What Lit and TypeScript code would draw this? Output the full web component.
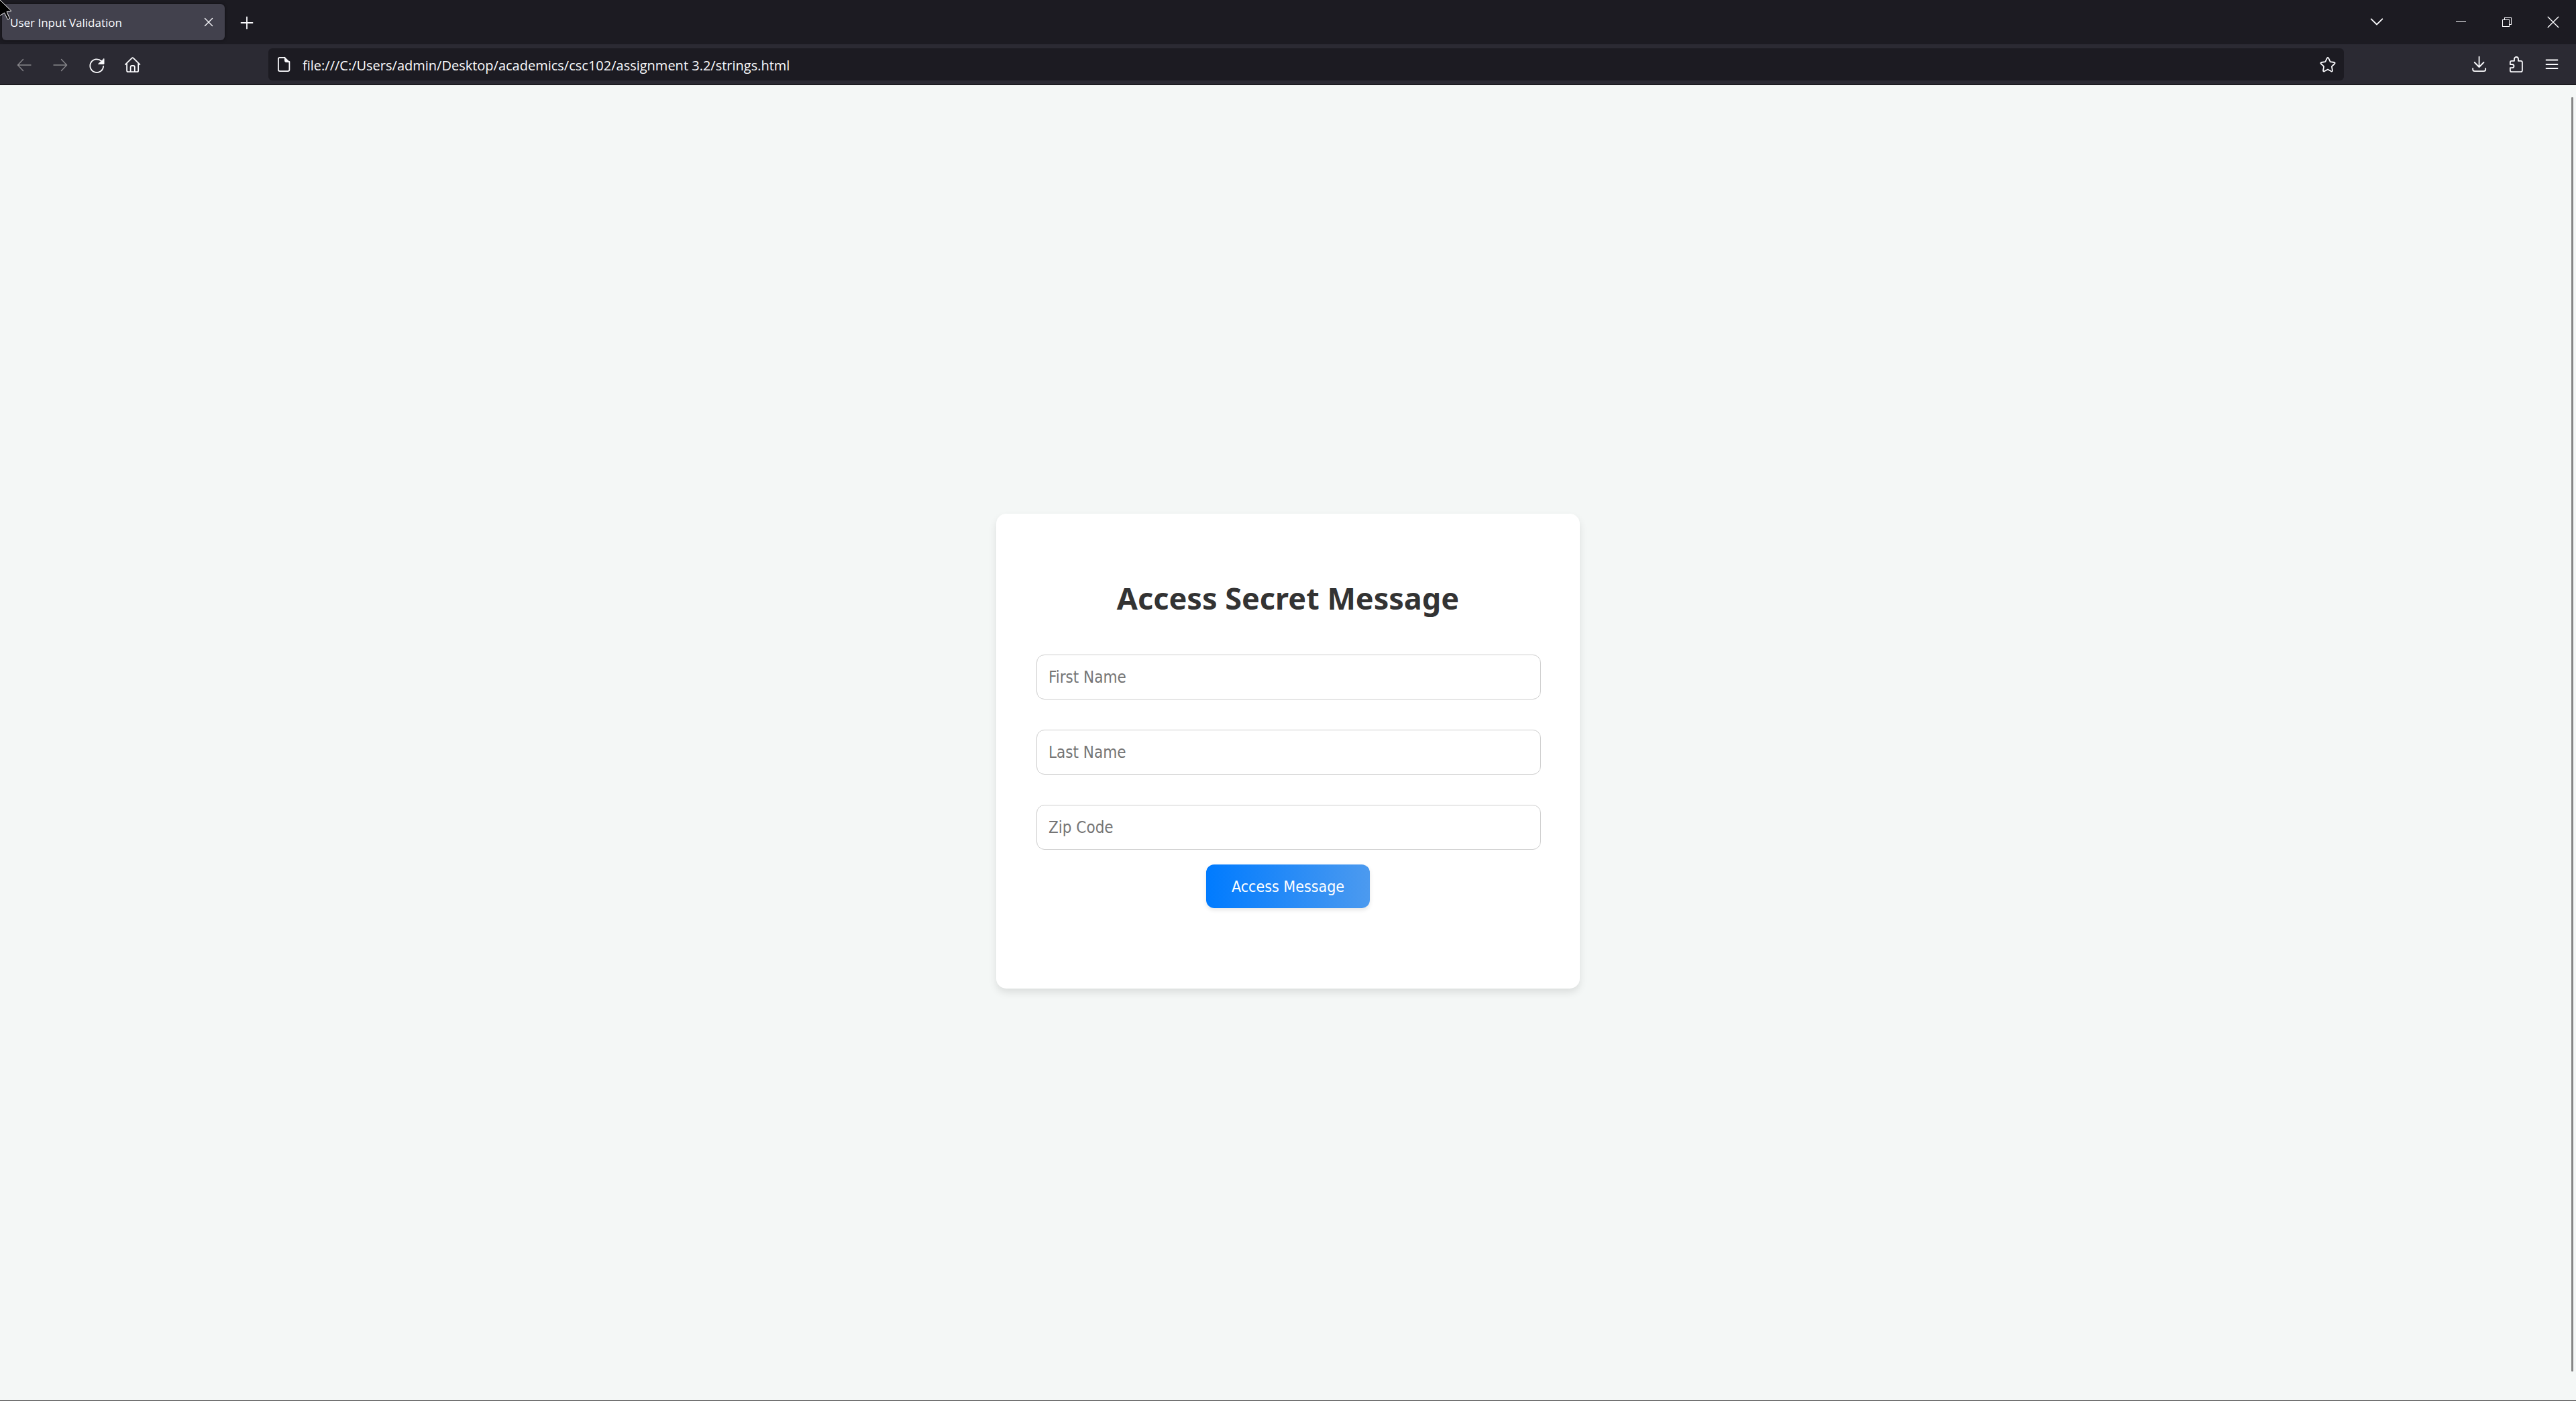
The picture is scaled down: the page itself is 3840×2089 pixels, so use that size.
import { LitElement, html, css, svg, type TemplateResult, type SVGTemplateResult } from "lit";
import { customElement, property, state } from "lit/decorators.js";

const GLYPHS: Record<string, SVGTemplateResult> = {
  close: svg`<path d="M6.5 6.5 17.5 17.5M17.5 6.5 6.5 17.5" />`,
  plus: svg`<path d="M12 4.5v17M3.5 13h17" />`,
  chevron: svg`<path d="M3.7 7.3 12 15.5 20.3 7.3" />`,
  minimize: svg`<path class="crisp" d="M6 11.5h15" />`,
  restore: svg`<path class="crisp" d="M6.5 8.5h10v10h-10zM9.5 8.5v-3h10v10h-3" />`,
  exit: svg`<path d="M5.2 4.2 20.8 19.8M20.8 4.2 5.2 19.8" />`,
  back: svg`<path d="M22 13H2.6M10.5 4.6 2.4 13l8.1 8.4" />`,
  forward: svg`<path d="M2 13h19.4M13.5 4.6 21.6 13l-8.1 8.4" />`,
  reload: svg`<path d="M22.1 14.6A9.9 9.9 0 1 1 19 7" /><path class="solid" d="M23 3.8v7.6h-8.2z" />`,
  home: svg`<path d="M.9 12.2 10.6 2.7q1.1-1 2.2 0l9.6 9.5M3.1 10.6v10.6q0 2 2 2h13.1q2 0 2-2V10.6M8.6 23v-7q0-2 2-2h2.2q2 0 2 2v7" />`,
  file: svg`<path d="M13.5 1.9H6.2q-2.3 0-2.3 2.3v15.6q0 2.3 2.3 2.3h11.9q2.3 0 2.3-2.3V8" /><path class="solid" d="M13.5 1.4 20.9 8.6h-5.4q-2 0-2-2z" />`,
  star: svg`<path d="M10.9 2.7q1.1-1.8 2.2 0l2.6 5.5 5.8.8q2 .5.7 2l-4.3 4.2 1 5.8q.1 2.1-1.8 1.3L12 19.5l-5.1 2.8q-1.9.8-1.8-1.3l1-5.8-4.3-4.2q-1.3-1.5.7-2l5.8-.8z" />`,
  download: svg`<path d="M11.6.6v15.2M4.7 9l6.9 7 6.9-7M2.2 18v1.5q0 2.7 2.7 2.7h13.6q2.7 0 2.7-2.7V18" />`,
  extension: svg`<path d="M3.9 12V9q0-2.2 2.2-2.2H10V4a3 3 0 0 1 6 0v2.8h3.7q2.2 0 2.2 2.2v12q0 2.2-2.2 2.2H6.1q-2.2 0-2.2-2.2v-3.8h3a2.6 2.6 0 0 0 0-5.2z" />`,
  menu: svg`<path d="M3.5 5.5h17M3.5 12h17M3.5 18h17" />`,
};

@customElement("chrome-icon")
export class ChromeIcon extends LitElement {
  @property() name = "";
  @property({ type: Number }) span = 24;

  static styles = css`
    :host {
      display: block;
      flex: none;
    }
    .glyph {
      display: block;
      overflow: visible;
      fill: none;
      stroke: currentColor;
      stroke-width: 1.8;
      stroke-linecap: round;
      stroke-linejoin: round;
    }
    .thin {
      stroke-width: 1.4;
    }
    .solid {
      fill: currentColor;
      stroke-width: 1;
    }
    .crisp {
      stroke-width: 1;
      stroke-linecap: butt;
      stroke-linejoin: miter;
      shape-rendering: crispEdges;
    }
  `;

  render() {
    const thin = ["exit", "back", "forward", "close"].includes(this.name);
    return html`<svg
      class="glyph ${thin ? "thin" : ""}"
      width=${this.span}
      height="24"
      viewBox="0 0 ${this.span} 24"
      aria-hidden="true"
    >${GLYPHS[this.name]}</svg>`;
  }
}

@customElement("browser-chrome")
export class BrowserChrome extends LitElement {
  static styles = css`
    :host {
      display: block;
      color: #fbfbfe;
      font-family: "Open Sans", "Noto Sans", sans-serif;
      border-bottom: 1px solid #0c0c0d;
    }
    button {
      display: flex;
      align-items: center;
      justify-content: center;
      flex: none;
      width: 48px;
      height: 48px;
      padding: 0;
      border: 0;
      border-radius: 6px;
      background: none;
      color: inherit;
    }
    button:disabled {
      color: #87868b;
    }
    .tabs {
      display: flex;
      align-items: center;
      height: 66px;
      background: #1c1b22;
    }
    .tab {
      display: flex;
      align-items: center;
      width: 332px;
      height: 54px;
      margin: 0 9px 0 3px;
      padding-left: 12px;
      box-sizing: border-box;
      border-radius: 6px;
      background: #42414d;
      box-shadow: 0 0 4px rgba(0, 0, 0, 0.5);
      font-size: 17px;
    }
    .title {
      flex: 1;
      white-space: nowrap;
    }
    .list {
      margin-left: auto;
      margin-right: 66px;
    }
    .window {
      width: 69px;
      height: 66px;
      border-radius: 0;
    }
    .toolbar {
      display: flex;
      align-items: center;
      gap: 6px;
      height: 60px;
      padding: 0 12px;
      background: #2b2a33;
    }
    .address {
      display: flex;
      align-items: center;
      gap: 16px;
      flex: 1;
      height: 48px;
      margin: 0 172px;
      padding-left: 11px;
      border-radius: 6px;
      background: #1c1b22;
    }
    .url {
      flex: 1;
      min-width: 0;
      padding: 2px 0 0;
      border: 0;
      outline: 0;
      background: none;
      color: inherit;
      font: inherit;
      font-size: 20px;
    }
  `;

  private button(label: string, icon: string, disabled = false): TemplateResult {
    return html`<button type="button" aria-label=${label} ?disabled=${disabled}>
      <chrome-icon name=${icon}></chrome-icon>
    </button>`;
  }

  render() {
    return html`
      <div class="tabs">
        <div class="tab">
          <span class="title">User Input Validation</span>
          ${this.button("Close tab", "close")}
        </div>
        ${this.button("New tab", "plus")}
        <button class="list" type="button" aria-label="List all tabs">
          <chrome-icon name="chevron"></chrome-icon>
        </button>
        ${[
          ["Minimize", "minimize"],
          ["Restore", "restore"],
          ["Close", "exit"],
        ].map(
          ([label, icon]) => html`<button class="window" type="button" aria-label=${label}>
            <chrome-icon name=${icon} span="25"></chrome-icon>
          </button>`
        )}
      </div>
      <nav class="toolbar">
        ${this.button("Back", "back", true)} ${this.button("Forward", "forward", true)}
        ${this.button("Reload", "reload")} ${this.button("Home", "home")}
        <div class="address">
          <chrome-icon name="file"></chrome-icon>
          <input
            class="url"
            type="text"
            aria-label="Address"
            spellcheck="false"
            value="file:///C:/Users/admin/Desktop/academics/csc102/assignment 3.2/strings.html"
          />
          ${this.button("Bookmark this page", "star")}
        </div>
        ${this.button("Downloads", "download")} ${this.button("Extensions", "extension")}
        ${this.button("Menu", "menu")}
      </nav>
    `;
  }
}

@customElement("secret-form")
export class SecretForm extends LitElement {
  @state() private values: Record<string, string> = {};

  private fields = [
    { id: "first-name", label: "First Name" },
    { id: "last-name", label: "Last Name" },
    { id: "zip-code", label: "Zip Code" },
  ];

  static styles = css`
    :host {
      display: block;
      width: 870px;
      max-width: 100%;
      box-sizing: border-box;
      padding: 60px;
      border-radius: 15px;
      background: #fff;
      box-shadow: 0 6px 12px rgba(0, 0, 0, 0.1);
    }
    .heading {
      margin: 34px 0 52px;
      color: #333;
      font: 700 45px/64px "Noto Sans", "Open Sans", sans-serif;
      text-align: center;
    }
    .form {
      display: flex;
      flex-direction: column;
      align-items: center;
      gap: 22px;
      margin-bottom: 60px;
      font-family: "DejaVu Sans Condensed", "DejaVu Sans", sans-serif;
      font-stretch: condensed;
    }
    .fields {
      display: grid;
      gap: 45px;
      align-self: stretch;
      margin-right: -2px;
    }
    .field {
      width: 100%;
      height: 67px;
      box-sizing: border-box;
      padding: 2px 17px 0;
      border: 1px solid #ccc;
      border-radius: 12px;
      background: #fff;
      color: #333;
      font-family: inherit;
      font-size: 24px;
    }
    .field::placeholder {
      color: #757575;
      opacity: 1;
    }
    .submit {
      height: 65px;
      padding: 2px 38px 0;
      border: 0;
      border-radius: 12px;
      background: linear-gradient(to right, #007bff, #4c9aef);
      box-shadow: 0 3px 6px rgba(0, 0, 0, 0.1);
      color: #fff;
      font-family: inherit;
      font-size: 23px;
    }
  `;

  private setValue(id: string, e: Event) {
    this.values = { ...this.values, [id]: (e.target as HTMLInputElement).value };
  }

  render() {
    return html`
      <h1 class="heading">Access Secret Message</h1>
      <form class="form" @submit=${(e: Event) => e.preventDefault()}>
        <div class="fields">
          ${this.fields.map(
            (f) => html`<input
              class="field"
              type="text"
              id=${f.id}
              aria-label=${f.label}
              placeholder=${f.label}
              .value=${this.values[f.id] ?? ""}
              @input=${(e: Event) => this.setValue(f.id, e)}
            />`
          )}
        </div>
        <button class="submit" type="submit">Access Message</button>
      </form>
    `;
  }
}

@customElement("app-root")
export class AppRoot extends LitElement {
  static styles = css`
    :host {
      display: flex;
      flex-direction: column;
      position: relative;
      min-height: 100vh;
      overflow: hidden;
    }
    .page {
      flex: 1;
      display: flex;
      align-items: center;
      justify-content: center;
      position: relative;
      padding-top: 24px;
      background: #f4f7f6;
      border-bottom: 1px solid #4a4a4a;
    }
    .scrollbar {
      position: absolute;
      top: 18px;
      right: 4px;
      bottom: 43px;
      width: 3px;
      border-radius: 1px;
      background: #868686;
    }
    .pointer {
      position: absolute;
      top: 0;
      left: 0;
      pointer-events: none;
    }
  `;

  render() {
    return html`
      <browser-chrome></browser-chrome>
      <main class="page">
        <secret-form></secret-form>
        <div class="scrollbar"></div>
      </main>
      <svg class="pointer" width="20" height="32" viewBox="0 0 20 32" aria-hidden="true">
        <path
          d="M-1 -1 17 16.5 10 17.5 14.5 27.5 11.5 29 6.5 19 -1 24z"
          fill="#000"
          stroke="#fff"
          stroke-width="1"
        />
      </svg>
    `;
  }
}
